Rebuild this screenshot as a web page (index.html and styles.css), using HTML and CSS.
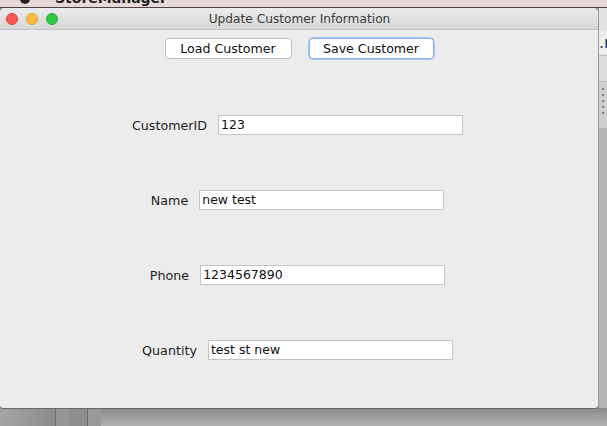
FILE: index.html
```html
<!DOCTYPE html>
<html>
<head>
<meta charset="utf-8">
<link rel="stylesheet" href="styles.css">
</head>
<body>
<div class="desktop">
  <div class="menubar"><span class="apple"></span><span class="appname">StoreManager</span></div>
  <div class="middle">
    <div class="window">
      <div class="titlebar">
        <div class="lights">
          <span class="light red"></span>
          <span class="light yellow"></span>
          <span class="light green"></span>
        </div>
        <div class="title">Update Customer Information</div>
      </div>
      <div class="content">
        <div class="buttons">
          <button class="btn">Load Customer</button>
          <button class="btn focus">Save Customer</button>
        </div>
        <div class="rows">
          <div class="row"><label>CustomerID</label><div class="field">123</div></div>
          <div class="row"><label>Name</label><div class="field">new test</div></div>
          <div class="row"><label>Phone</label><div class="field">1234567890</div></div>
          <div class="row"><label>Quantity</label><div class="field">test st new</div></div>
        </div>
      </div>
    </div>
    <div class="side">
      <div class="side-top"></div>
      <div class="side-text">.r</div>
      <div class="side-bar"></div>
      <div class="side-dots"><i></i><i></i><i></i><i></i><i></i></div>
      <div class="side-rest"></div>
    </div>
  </div>
  <div class="bottom">
    <div class="b1"></div><div class="b2"></div><div class="b3"></div><div class="b4"></div><div class="b5"></div>
  </div>
</div>
</body>
</html>
```
FILE: styles.css
```css
html, body {
  margin: 0;
  padding: 0;
}
body {
  width: 607px;
  height: 426px;
  overflow: hidden;
  font-family: "DejaVu Sans", "Liberation Sans", sans-serif;
  background: #9a9a9a;
}
.desktop {
  display: flex;
  flex-direction: column;
  width: 607px;
  height: 426px;
}
.menubar {
  height: 8px;
  background: #e6d9d6;
  position: relative;
  overflow: hidden;
  border-bottom: 1px solid #4a4444;
  box-sizing: border-box;
}
.apple {
  position: absolute;
  left: 20px;
  top: -6px;
  width: 10px;
  height: 10px;
  border-radius: 50%;
  background: #222;
}
.appname {
  position: absolute;
  left: 55px;
  top: -10px;
  font-size: 14px;
  font-weight: bold;
  color: #222;
}
.middle {
  display: flex;
  height: 400px;
}
.window {
  width: 598px;
  flex-shrink: 0;
  display: flex;
  flex-direction: column;
  background: #ececec;
  border-radius: 5px 5px 3px 3px;
  overflow: hidden;
  box-shadow: 0 1px 0 #6a6a6a;
  z-index: 1;
}
.titlebar {
  height: 22px;
  box-sizing: border-box;
  border-bottom: 1px solid #c3c3c3;
  background: linear-gradient(#ebebeb, #d6d6d6);
  position: relative;
  display: flex;
  align-items: center;
  justify-content: center;
}
.lights {
  position: absolute;
  left: 6px;
  top: 5px;
  display: flex;
  gap: 8px;
}
.light {
  width: 12px;
  height: 12px;
  border-radius: 50%;
  box-sizing: border-box;
}
.red { background: #fc5753; border: 1px solid #df3e3a; }
.yellow { background: #fdbc40; border: 1px solid #dea236; }
.green { background: #33c748; border: 1px solid #27aa35; }
.title {
  font-size: 12.2px;
  color: #3b3b3b;
  padding-left: 1px;
}
.content {
  flex: 1;
  display: flex;
  flex-direction: column;
  align-items: center;
}
.buttons {
  display: flex;
  gap: 17px;
  margin-top: 8px;
}
.btn {
  font-family: "DejaVu Sans", sans-serif;
  font-size: 12.6px;
  color: #111;
  background: #fff;
  border: 1px solid #bdbdbd;
  border-radius: 4px;
  height: 21px;
  padding: 0;
  box-sizing: border-box;
}
.btn:first-child { width: 127px; }
.btn.focus {
  width: 125px;
  border: 1px solid #8eb3ea;
  box-shadow: 0 0 0 1px #a9c7f0;
}
.rows {
  display: flex;
  flex-direction: column;
  gap: 55px;
  margin-top: 56px;
  padding-right: 3px;
}
.row {
  display: flex;
  align-items: center;
  justify-content: center;
  gap: 11px;
  height: 20px;
}
.row label {
  font-size: 12.7px;
  color: #1c1c1c;
}
.field {
  width: 245px;
  height: 20px;
  box-sizing: border-box;
  background: #fff;
  border: 1px solid #c4c4c4;
  font-size: 12.5px;
  color: #111;
  padding: 1px 0 0 2px;
  line-height: 16px;
}
.side {
  flex: 1;
  min-width: 0;
  display: flex;
  flex-direction: column;
  background: #c9c9c9;
  border-left: 1px solid #9a9a9a;
}
.side-top {
  height: 23px;
  background: #e2e2e2;
}
.side-text {
  height: 24px;
  background: #ececec;
  font-size: 16px;
  line-height: 24px;
  color: #15324f;
  overflow: hidden;
  white-space: nowrap;
}
.side-bar {
  height: 25px;
  background: #dcdcdc;
  border-top: 1px solid #bdbdbd;
  border-bottom: 1px solid #bdbdbd;
}
.side-dots {
  display: flex;
  flex-direction: column;
  gap: 4px;
  padding: 6px 0 0 3px;
  height: 40px;
  background: #cfcfcf;
}
.side-dots i {
  width: 2px;
  height: 2px;
  background: #808080;
}
.side-rest {
  flex: 1;
  background: #b5b5b5;
}
.bottom {
  flex: 1;
  display: flex;
  background: linear-gradient(#8a8a8a, #a8a8a8);
}
.b1 { width: 55px; background: linear-gradient(90deg, #a4a4a4, #8c8c8c); border-right: 1px solid #6e6e6e; }
.b2 { width: 13px; background: #959595; }
.b3 { width: 18px; background: #8e8e8e; border-right: 1px solid #6a6a6a; }
.b4 { width: 13px; background: #999; }
.b5 { flex: 1; background: linear-gradient(#8a8a8a, #b0b0b0); }
```
